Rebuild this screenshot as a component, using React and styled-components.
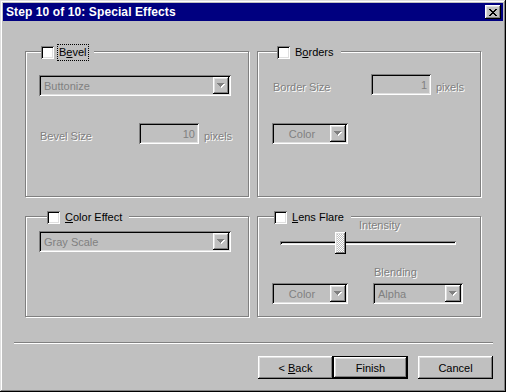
import React from 'react';
import styled, { createGlobalStyle } from 'styled-components';

const Global = createGlobalStyle`
  html, body { margin: 0; padding: 0; background: #c0c0c0; }
  body { font-family: "Liberation Sans", Arial, sans-serif; font-size: 11px; color: #000; }
  * { box-sizing: border-box; }
`;

const raised = `
  box-shadow: inset -1px -1px #000, inset 1px 1px #fff, inset -2px -2px #808080, inset 2px 2px #dfdfdf;
`;
const sunken = `
  box-shadow: inset 1px 1px #808080, inset -1px -1px #fff, inset 2px 2px #000, inset -2px -2px #dfdfdf;
`;

const Window = styled.div`
  width: 506px;
  height: 392px;
  background: #c0c0c0;
  padding: 3px;
  display: flex;
  flex-direction: column;
  box-shadow: inset -1px -1px #000, inset 1px 1px #dfdfdf, inset -2px -2px #808080, inset 2px 2px #fff;
`;

const TitleBar = styled.div`
  height: 18px;
  background: #000080;
  display: flex;
  align-items: center;
  justify-content: space-between;
  padding: 0 2px 0 3px;
`;

const Title = styled.span`
  color: #fff;
  font-weight: bold;
  font-size: 12px;
  letter-spacing: 0.1px;
`;

const CloseButton = styled.div`
  width: 16px;
  height: 14px;
  background: #c0c0c0;
  display: flex;
  align-items: center;
  justify-content: center;
  ${raised}
`;

const Body = styled.div`
  flex: 1;
  padding: 0 10px 0 11px;
  display: flex;
  flex-direction: column;
`;

const Grid = styled.div`
  margin: 30px 0 0 11px;
  display: grid;
  grid-template-columns: 224px 224px;
  grid-template-rows: 146px 101px;
  column-gap: 8px;
  row-gap: 19px;
`;

const Group = styled.div`
  position: relative;
  border: 1px solid #808080;
  box-shadow: inset 1px 1px #fff, 1px 1px #fff;
  padding: ${(p) => p.pad};
  display: flex;
  flex-direction: column;
  align-items: flex-start;
`;

const Legend = styled.div`
  position: absolute;
  top: -8px;
  left: ${(p) => p.left}px;
  height: 17px;
  display: flex;
  align-items: center;
  background: #c0c0c0;
  padding-right: 5px;
`;

const CheckBox = styled.div`
  width: 13px;
  height: 13px;
  background: #fff;
  ${sunken}
`;

const CheckLabel = styled.span`
  margin-left: 3px;
  height: 17px;
  line-height: 15px;
  padding: 0 1px;
  border: 1px dotted ${(p) => (p.focused ? '#000' : 'transparent')};
  white-space: nowrap;
`;

const Combo = styled.div`
  width: ${(p) => p.w}px;
  height: 21px;
  margin-left: ${(p) => p.ml || 0}px;
  margin-top: ${(p) => p.mt || 0}px;
  padding: 2px;
  background: #c0c0c0;
  display: flex;
  align-items: center;
  ${sunken}
`;

const ComboText = styled.span`
  flex: 1;
  color: #808080;
  padding-left: ${(p) => (p.center ? 0 : 3)}px;
  text-align: ${(p) => (p.center ? 'center' : 'left')};
  white-space: nowrap;
`;

const ArrowButton = styled.div`
  width: 16px;
  height: 17px;
  background: #c0c0c0;
  display: flex;
  align-items: center;
  justify-content: center;
  ${raised}
`;

const Field = styled.div`
  width: 60px;
  height: 21px;
  padding: 0 4px;
  background: #c0c0c0;
  color: #808080;
  display: flex;
  align-items: center;
  justify-content: flex-end;
  ${sunken}
`;

const Row = styled.div`
  display: flex;
  align-items: ${(p) => p.align || 'center'};
  margin-top: ${(p) => p.mt || 0}px;
  margin-left: ${(p) => p.ml || 0}px;
`;

const Caption = styled.span`
  display: block;
  color: #808080;
  text-shadow: 1px 1px 0 #fff;
  line-height: 13px;
  white-space: nowrap;
  width: ${(p) => (p.w ? `${p.w}px` : 'auto')};
  margin-left: ${(p) => p.ml || 0}px;
  margin-top: ${(p) => p.mt || 0}px;
`;

const Column = styled.div`
  display: flex;
  flex-direction: column;
  margin-left: ${(p) => p.ml || 0}px;
`;

const Slider = styled.div`
  position: relative;
  width: 176px;
  height: 22px;
  margin-left: 22px;
  display: flex;
  align-items: center;
`;

const Track = styled.div`
  width: 100%;
  height: 4px;
  box-shadow: inset 1px 1px #808080, inset -1px -1px #fff, inset 2px 2px #000, inset -2px -2px #dfdfdf;
`;

const Thumb = styled.div`
  position: absolute;
  top: 0;
  left: ${(p) => p.left}px;
  width: 11px;
  height: 22px;
  background-color: #c0c0c0;
  background-image: repeating-conic-gradient(#fff 0 25%, #c0c0c0 0 50%);
  background-size: 2px 2px;
  ${raised}
`;

const Separator = styled.div`
  margin-top: 25px;
  height: 2px;
  border-top: 1px solid #808080;
  border-bottom: 1px solid #fff;
`;

const Buttons = styled.div`
  margin-top: 12px;
  display: flex;
  justify-content: flex-end;
`;

const Button = styled.div`
  width: 75px;
  height: 23px;
  margin-left: ${(p) => p.ml || 0}px;
  background: #c0c0c0;
  display: flex;
  align-items: center;
  justify-content: center;
  ${(p) =>
    p.primary
      ? `box-shadow: inset 0 0 0 1px #000, inset -2px -2px #000, inset 2px 2px #fff, inset -3px -3px #808080, inset 3px 3px #dfdfdf;`
      : raised}
`;

const ButtonText = styled.span`
  white-space: pre;
`;

const DownArrow = () => (
  <svg width="8" height="5" viewBox="0 0 8 5" shapeRendering="crispEdges">
    <path d="M1 1h7v1H1z M2 2h5v1H2z M3 3h3v1H3z M4 4h1v1H4z" fill="#fff" />
    <path d="M0 0h7v1H0z M1 1h5v1H1z M2 2h3v1H2z M3 3h1v1H3z" fill="#808080" />
  </svg>
);

const CloseIcon = () => (
  <svg width="8" height="7" viewBox="0 0 8 7" shapeRendering="crispEdges">
    <path
      d="M0 0h2v1H0z M6 0h2v1H6z M1 1h2v1H1z M5 1h2v1H5z M2 2h4v1H2z M3 3h2v1H3z M2 4h4v1H2z M1 5h2v1H1z M5 5h2v1H5z M0 6h2v1H0z M6 6h2v1H6z"
      fill="#000"
    />
  </svg>
);

const ComboBox = ({ text, w, ml, mt, center }) => (
  <Combo w={w} ml={ml} mt={mt}>
    <ComboText center={center}>{text}</ComboText>
    <ArrowButton>
      <DownArrow />
    </ArrowButton>
  </Combo>
);

const GroupLegend = ({ left, focused, children }) => (
  <Legend left={left}>
    <CheckBox />
    <CheckLabel focused={focused}>{children}</CheckLabel>
  </Legend>
);

export default function App() {
  return (
    <>
      <Global />
      <Window>
        <TitleBar>
          <Title>Step 10 of 10: Special Effects</Title>
          <CloseButton>
            <CloseIcon />
          </CloseButton>
        </TitleBar>
        <Body>
          <Grid>
            <Group pad="23px 0 0 13px">
              <GroupLegend left={15} focused>
                B<u>e</u>vel
              </GroupLegend>
              <ComboBox text="Buttonize" w={192} />
              <Row mt={27}>
                <Caption w={99} ml={1} mt={6}>Bevel Size</Caption>
                <Field>10</Field>
                <Caption ml={5} mt={6}>pixels</Caption>
              </Row>
            </Group>
            <Group pad="22px 0 0 14px">
              <GroupLegend left={19}>
                B<u>o</u>rders
              </GroupLegend>
              <Row>
                <Caption w={98} ml={1} mt={6}>Border Size</Caption>
                <Field>1</Field>
                <Caption ml={5} mt={6}>pixels</Caption>
              </Row>
              <ComboBox text="Color" w={76} mt={28} center />
            </Group>
            <Group pad="14px 0 0 13px">
              <GroupLegend left={21}>
                <u>C</u>olor Effect
              </GroupLegend>
              <ComboBox text="Gray Scale" w={192} />
            </Group>
            <Group pad="1px 0 0 0">
              <GroupLegend left={16}>
                <u>L</u>ens Flare
              </GroupLegend>
              <Caption ml={101} mt={1}>Intensity</Caption>
              <Slider>
                <Track />
                <Thumb left={55} />
              </Slider>
              <Row align="flex-end" ml={14} mt={12}>
                <ComboBox text="Color" w={76} center />
                <Column ml={25}>
                  <Caption ml={1}>Blending</Caption>
                  <ComboBox text="Alpha" w={90} mt={4} />
                </Column>
              </Row>
            </Group>
          </Grid>
          <Separator />
          <Buttons>
            <Button>
              <ButtonText>
                {'< '}
                <u>B</u>ack
              </ButtonText>
            </Button>
            <Button primary>Finish</Button>
            <Button ml={10}>Cancel</Button>
          </Buttons>
        </Body>
      </Window>
    </>
  );
}
